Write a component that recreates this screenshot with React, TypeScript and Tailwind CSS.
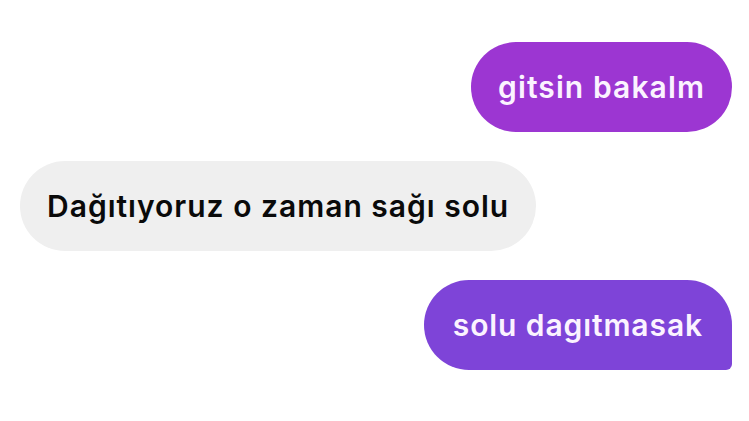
export default function App() {
  return (
    <div className="w-[749px] h-[421px] bg-white overflow-hidden pt-[42px] pl-[20px] pr-[17px] flex flex-col gap-[29px] font-['Inter','Noto_Sans',sans-serif] text-[30px] font-semibold">
      {/* outgoing */}
      <div className="flex justify-end">
        <div className="h-[90px] px-[27px] flex items-center rounded-full bg-[#9c36d2] text-[#fbf3ff] tracking-[1.1px]">
          gitsin bakalm
        </div>
      </div>

      {/* incoming */}
      <div className="flex justify-start">
        <div className="h-[90px] px-[27px] flex items-center rounded-full bg-[#efefef] text-[#0a0a0a] tracking-[1px]">
          Dağıtıyoruz o zaman sağı solu
        </div>
      </div>

      {/* outgoing, last in group */}
      <div className="flex justify-end">
        <div className="h-[90px] px-[29px] flex items-center rounded-l-[45px] rounded-tr-[45px] rounded-br-[6px] bg-[#7e44d8] text-[#fbf3ff] tracking-[0.9px]">
          solu dagıtmasak
        </div>
      </div>
    </div>
  );
}
